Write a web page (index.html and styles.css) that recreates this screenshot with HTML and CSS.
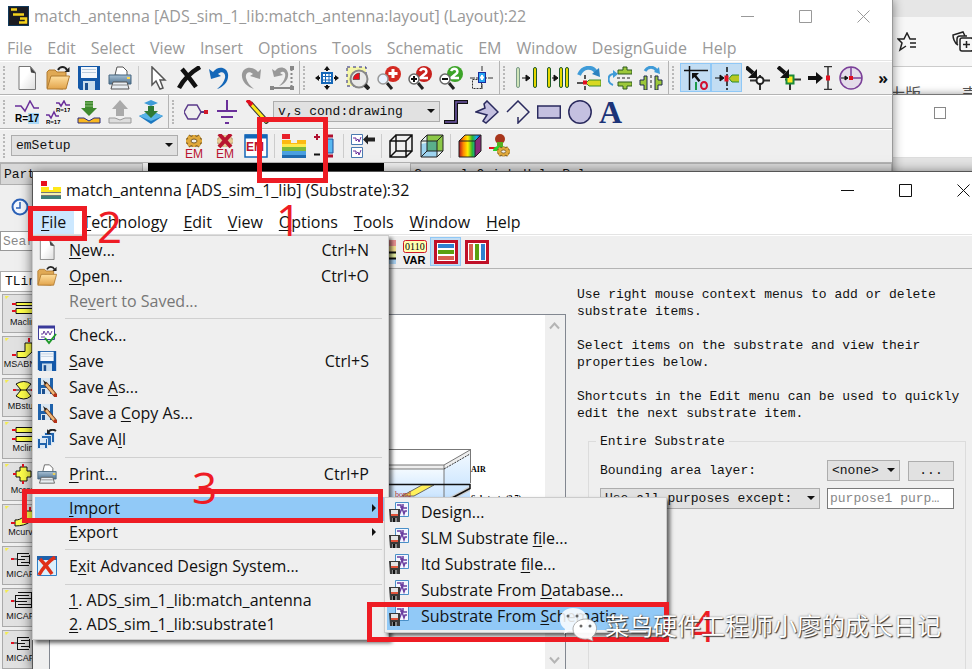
FILE: index.html
```
<!DOCTYPE html>
<html lang="en">
<head>
  <meta charset="UTF-8" />
  <meta name="viewport" content="width=device-width, initial-scale=1" />
  <title>match_antenna (Substrate)</title>
  <link rel="stylesheet" href="styles.css">
</head>
<body>

<!-- shared icons -->
<svg class="sprite" aria-hidden="true">
  <defs>
    <linearGradient id="gPage" x1="0" y1="0" x2="1" y2="1"><stop offset="0.4" stop-color="#fff"/><stop offset="1" stop-color="#ddd"/></linearGradient>
    <linearGradient id="gFolder" x1="0" y1="0" x2="0" y2="1"><stop offset="0" stop-color="#ffdf9e"/><stop offset="1" stop-color="#e2a44c"/></linearGradient>
    <linearGradient id="gSteel" x1="0" y1="0" x2="0" y2="1"><stop offset="0" stop-color="#a8c0d4"/><stop offset="1" stop-color="#4f7390"/></linearGradient>
    <linearGradient id="gRain" x1="0" y1="0" x2="1" y2="0"><stop offset="0" stop-color="#b01020"/><stop offset="0.2" stop-color="#ff8a00"/><stop offset="0.4" stop-color="#ffee00"/><stop offset="0.6" stop-color="#2db52d"/><stop offset="0.8" stop-color="#18a6f0"/><stop offset="1" stop-color="#2030c0"/></linearGradient>
    <linearGradient id="gSky" x1="0" y1="0" x2="0" y2="1"><stop offset="0" stop-color="#f4faff"/><stop offset="1" stop-color="#b9dcff"/></linearGradient>
  </defs>
  <symbol id="i-new" viewBox="0 0 24 24"><path d="M4 .5h11.500l5 6V23.500H4z" fill="url(#gPage)" stroke="#777"/><path d="M15 .5l6 7-5-1z" fill="#444"/></symbol>
  <symbol id="i-open" viewBox="0 0 24 24"><path d="M1 22V6l2-2h6l2 2h9v4l-3 13z" fill="#e0a955" stroke="#b07a30"/><path d="M1 23L5 10h18.500L20 23z" fill="url(#gFolder)" stroke="#b07a30"/><path d="M12 4c2-4 7-4 9 0" fill="none" stroke="#222" stroke-width="2"/><path d="M23.500 1v5h-5z" fill="#222"/></symbol>
  <symbol id="i-save" viewBox="0 0 24 24"><path d="M1 0h22v24H3l-2-2z" fill="#1358a8"/><path d="M4 1h16v11H4z" fill="#f4f8fc"/><path d="M5 3.500h14M5 6.500h14" stroke="#bcd"/><path d="M6 15h12v9H6z" fill="#c8dcec"/><path d="M8 17h3v7H8z" fill="#1b4f8f"/></symbol>
  <symbol id="i-print" viewBox="0 0 24 24"><path d="M7 9L9 1h6l4 4v5z" fill="#fff" stroke="#555"/><path d="M1 9h22v9H1z" fill="url(#gSteel)" stroke="#466680"/><path d="M5 16h14l2 7H3z" fill="#e8eef2" stroke="#555"/><path d="M5 19h14" stroke="#888"/><path d="M19 12h3" stroke="#ffd84a" stroke-width="2"/></symbol>
  <symbol id="i-strata" viewBox="0 0 24 24"><path d="M0 0h8v5H0z" fill="#e8202a"/><path d="M0 6h9v3h6V6h9v6H0z" fill="#fdb913"/><path d="M0 10h24v3H0z" fill="#ffe94a"/><path d="M0 13h24v4H0z" fill="#7fb83a"/><path d="M0 17h24v4H0z" fill="#4a9fe0"/><path d="M0 21h24v3H0z" fill="#1f6ab0"/></symbol>
  <symbol id="i-import" viewBox="0 0 20 20"><path d="M6.500.5h13v14h-13z" fill="#f4f6ff" stroke="#4a90c8"/><path d="M8 3h4v3M14 2v4h4M8 8h2l1 3 2-5 2 6 1-3h2" fill="none" stroke="#6a3fa0" stroke-width="1.500"/><path d="M0 7h11v13H1z" fill="#3a3a3a"/><path d="M2 8h7v6H2z" fill="#e4e4e4"/><path d="M2 13h7" stroke="#e0533a" stroke-width="2"/><path d="M3 16h5v4H3z" fill="#888"/><path d="M4 16h2v4H4z" fill="#111"/></symbol>
  <symbol id="i-saveas" viewBox="0 0 20 20"><path d="M1 1h15v16H1z" fill="#1f62ab"/><path d="M4 1h9v7H4zM4 11h9v6H4z" fill="#d8e6f2"/><path d="M5 12h3v5H5z" fill="#1b4f8f"/><path d="M8 6l11 13" stroke="#7a3d18" stroke-width="4"/><path d="M8 6l10 12" stroke="#f0b878" stroke-width="2.500"/><path d="M6 3l4 3-2 2z" fill="#222"/><path d="M17 17l3 3" stroke="#b83018" stroke-width="3"/></symbol>
  <symbol id="i-bend" viewBox="0 0 24 24"><path d="M2 9c4-9 13-9 17-3" fill="none" stroke="#3f9bd8" stroke-width="4"/><path d="M22 2l1 9-8-3z" fill="#2c82c0"/></symbol>
  <symbol id="i-gear" viewBox="0 0 24 14"><path d="M12 1v12M4 7h16M6 2.500l12 9M18 2.500l-12 9" stroke="#7a5a20" stroke-width="5"/><path d="M12 1v12M4 7h16M6 2.500l12 9M18 2.500l-12 9" stroke="#e0a93c" stroke-width="3"/><ellipse cx="12" cy="7" rx="7" ry="4.500" fill="#e0a93c"/><ellipse cx="12" cy="7" rx="3" ry="2" fill="#efefef" stroke="#7a5a20"/></symbol>
  <symbol id="i-new-part" viewBox="0 0 5 5"><path d="M0 0h5L1 4z" fill="#f4ec50"/></symbol>
</svg>

<!-- browser window behind everything -->
<div class="browser">
  <div class="browser-tabs"></div>
  <div class="browser-bar">
    <svg width="22" height="20" viewBox="0 0 22 20"><path d="M9 14l-6 4 2-7-4-4h6l3-6 3 6h6M13 11h6M13 15h6" fill="none" stroke="#222" stroke-width="1.500"/></svg>
    <svg width="22" height="22" viewBox="0 0 22 22"><path d="M6 14C2 12 1 6 1 4l10-3 2 4M5 14V8c0-2 1-3 3-3h7" fill="none" stroke="#222" stroke-width="1.500"/><rect x="8" y="7" width="13" height="13" rx="2" fill="#f7f7f7" stroke="#222" stroke-width="1.500"/><path d="M14.500 10v7M11 13.500h7" stroke="#222" stroke-width="1.500"/></svg>
  </div>
  <div class="browser-links"><span>士版</span><span>壳</span></div>
</div>
<div class="back-window">
  <div class="back-title"><i class="square"></i></div>
</div>

<!-- layout window -->
<div class="window layout-window">
  <header class="titlebar">
    <svg width="21" height="20" viewBox="0 0 21 20"><rect x="0.500" y="0.500" width="20" height="19" fill="#1c1c22" stroke="#123a5c"/><path d="M3 3.500h6M5 8.500h6M10 8.500h6M12 12.500h6v4H11" fill="none" stroke="#f5d21c" stroke-width="2.500"/></svg>
    <span class="title">match_antenna [ADS_sim_1_lib:match_antenna:layout] (Layout):22</span>
    <button class="win-btn" aria-label="Minimize"><svg width="13" height="13"><path d="M0 6.500h13" stroke="currentColor"/></svg></button>
    <button class="win-btn" aria-label="Maximize"><svg width="13" height="13"><path d="M.5.5h12v12H.5z" fill="none" stroke="currentColor"/></svg></button>
    <button class="win-btn" aria-label="Close"><svg width="13" height="13"><path d="M.5.5l12 12M12.500.5l-12 12" stroke="currentColor"/></svg></button>
  </header>
  <nav class="menubar">
    <button>File</button><button>Edit</button><button>Select</button><button>View</button><button>Insert</button><button>Options</button><button>Tools</button><button>Schematic</button><button>EM</button><button>Window</button><button>DesignGuide</button><button>Help</button>
  </nav>

  <div class="toolrow">
    <div class="toolbar">
      <button class="tool" aria-label="New"><svg><use href="#i-new"/></svg></button>
      <button class="tool" aria-label="Open"><svg><use href="#i-open"/></svg></button>
      <button class="tool" aria-label="Save"><svg><use href="#i-save"/></svg></button>
      <button class="tool" aria-label="Print"><svg><use href="#i-print"/></svg></button>
      <i class="sep"></i>
      <button class="tool" aria-label="Select"><svg viewBox="0 0 24 24"><path d="M6 1v18l4-4 4 8 3-1-3-8h5z" fill="#fff" stroke="#555" stroke-width="1.500"/></svg></button>
      <button class="tool" aria-label="Delete"><svg viewBox="0 0 24 24"><path d="M5 3q6 7 14 18M23 1Q9 9 2 22" fill="none" stroke="#111" stroke-width="4.500"/></svg></button>
      <button class="tool" aria-label="Undo"><svg viewBox="0 0 24 24"><path d="M1 3l2 10 10-3-3-2c4-4 8-1 7 4-1 4-4 8-8 11 7-2 12-8 11-15-1-7-10-9-15-2z" fill="#1467b8"/></svg></button>
      <button class="tool" aria-label="Redo"><svg viewBox="0 0 24 24"><path d="M22 3l-1 10-10-3 3-2c-4-4-8-1-7 4 1 4 4 8 8 11C8 21 2 15 3 8c1-7 10-9 16-2z" fill="#999"/></svg></button>
      <button class="tool" aria-label="End"><svg viewBox="0 0 24 24"><path d="M2 3l2 8 9-2-3-2c4-3 6 0 5 4-1 4-3 6-6 9 6-2 10-7 9-13-1-6-9-8-13-2z" fill="#999"/><path d="M2 22h18" stroke="#888" stroke-width="2"/><path d="M21.500 3v18" stroke="#888" stroke-width="2" stroke-dasharray="2 2"/><path d="M0 20h4v4H0zM20 20h4v4h-4zM20 0h4v4h-4z" fill="#888"/></svg></button>
    </div>
    <div class="toolbar">
      <button class="tool" aria-label="View all"><svg viewBox="0 0 24 24"><path d="M7 7h10v10H7z" fill="#fff" stroke="#1467b8" stroke-width="2"/><path d="M10.500 7v10M14 7v10M7 10.500h10M7 14h10" stroke="#1467b8"/><path d="M12 0l3 4H9zM12 24l3-4H9zM0 12l4-3v6zM24 12l-4-3v6z" fill="#111"/><path d="M12 2v3M12 19v3M2 12h3M19 12h3" stroke="#111" stroke-width="2"/></svg></button>
      <button class="tool" aria-label="Zoom area"><svg viewBox="0 0 24 24"><rect x="1" y="1" width="19" height="19" fill="#f4f6a8" stroke="#22227a" stroke-dasharray="3 3"/><circle cx="13" cy="13" r="8.500" fill="#e8e8e8" stroke="#888" stroke-width="2"/><path d="M13.500 13.500V7A6.500 6.500 0 0 0 7 13.500z" fill="#e8101c" stroke="#222" stroke-width="0.500"/><path d="M19 19l4 4" stroke="#222" stroke-width="4"/></svg></button>
      <button class="tool" aria-label="Zoom in"><svg viewBox="0 0 24 24"><path d="M10 17l5 6" stroke="#222" stroke-width="3"/><circle cx="16" cy="8" r="8" fill="#d42a22"/><path d="M16 3v9M11.500 7.500h9" stroke="#fff" stroke-width="3"/><circle cx="6" cy="13" r="5" fill="#eaf4ff" stroke="#999" stroke-width="1.500"/></svg></button>
      <button class="tool" aria-label="Zoom in by 2"><svg viewBox="0 0 24 24"><path d="M10 17l5 6" stroke="#222" stroke-width="3"/><circle cx="16" cy="8" r="8" fill="#c8201c"/><path d="M12 5c2-4 8-2 6 2l-6 5h8" fill="none" stroke="#fff" stroke-width="2.500"/><circle cx="6" cy="13" r="5" fill="#fff" stroke="#666" stroke-width="1.500"/><path d="M6 10v6M3 13h6" stroke="#111" stroke-width="2"/></svg></button>
      <button class="tool" aria-label="Zoom out by 2"><svg viewBox="0 0 24 24"><path d="M10 17l5 6" stroke="#222" stroke-width="3"/><circle cx="16" cy="8" r="8" fill="#3da428"/><path d="M12 5c2-4 8-2 6 2l-6 5h8" fill="none" stroke="#fff" stroke-width="2.500"/><circle cx="6" cy="13" r="5" fill="#fff" stroke="#666" stroke-width="1.500"/><path d="M3 13h6" stroke="#111" stroke-width="2"/></svg></button>
      <button class="tool" aria-label="Center"><svg viewBox="0 0 24 24"><path d="M12 0v24M0 12h24" stroke="#333" stroke-dasharray="5 1"/><path d="M2.500 13.500h9v9h-9z" fill="none" stroke="#333" stroke-dasharray="2 1"/><rect x="8.500" y="6.500" width="7" height="10" fill="#29a3f2" stroke="#1a2a9a"/><path d="M12 9v5M10 11.500h4" stroke="#fff" stroke-width="2"/></svg></button>
    </div>
    <div class="toolbar">
      <button class="tool" aria-label="Move"><svg viewBox="0 0 24 24"><rect x="1.500" y="1.500" width="3" height="20" rx="1.500" fill="#cfe4b8" stroke="#7a9a88"/><rect x="18.500" y="1.500" width="3" height="20" rx="1.500" fill="#e6d800" stroke="#1e5a2a"/><path d="M7 12h6M11 9v6l4-3z" fill="#111" stroke="#111"/></svg></button>
      <button class="tool" aria-label="Copy"><svg viewBox="0 0 24 24"><g fill="#e6d800" stroke="#1e5a2a"><rect x="1.500" y="1.500" width="3" height="20" rx="1.500"/><rect x="13.500" y="1.500" width="3" height="20" rx="1.500"/><rect x="19.500" y="1.500" width="3" height="20" rx="1.500"/></g><path d="M6 12h3M8 9v6l4-3z" fill="#111" stroke="#111"/></svg></button>
      <button class="tool" aria-label="Rotate"><svg viewBox="0 0 24 24"><use href="#i-bend"/><path d="M0 17h6M8 9v4M8 20v4" stroke="#222" stroke-width="1.500"/><path d="M12 14h12v6H12l-3-3z" fill="#d8d820" stroke="#3a8a2a"/><rect x="6" y="14.500" width="4" height="4" fill="#e01020"/></svg></button>
      <button class="tool" aria-label="Mirror X"><svg viewBox="0 0 24 24"><path d="M6 8C-1 8-1 17 5 19" fill="none" stroke="#3f9bd8" stroke-width="2"/><path d="M5 4l5 4-5 4z" fill="#3f9bd8"/><path d="M9 12h15" stroke="#222" stroke-dasharray="3 2"/><path d="M10 8V4h5V1h4v3h5v4zM10 16v4h5v3h4v-3h5v-4z" fill="#9cc83a" stroke="#2c5a1e"/></svg></button>
      <button class="tool" aria-label="Mirror Y"><svg viewBox="0 0 24 24"><path d="M6 5c3-5 9-5 12 0" fill="none" stroke="#3f9bd8" stroke-width="3"/><path d="M20 1l1 7-6-2z" fill="#3f9bd8"/><path d="M12 9v15" stroke="#222" stroke-dasharray="3 2"/><path d="M8 10H5v4H1v5h4v5h3zM16 10h3v4h4v5h-4v5h-3z" fill="#9cc83a" stroke="#1f2a4e"/></svg></button>
    </div>
    <div class="toolbar last">
      <button class="tool on" aria-label="Grid snap"><svg viewBox="0 0 24 24"><path d="M5.500 0v24M0 4.500h24" stroke="#111" stroke-width="1.500"/><path d="M8 7h7l-2.500 2.500 4 5-2 1.500-4-5L8 13z" fill="#111"/><path d="M12 16v8" stroke="#1a9a4a" stroke-width="2"/><ellipse cx="20" cy="19.500" rx="3" ry="3.500" fill="none" stroke="#d01030" stroke-width="2"/></svg></button>
      <button class="tool on" aria-label="Pin snap"><svg viewBox="0 0 24 24"><path d="M12 1v23" stroke="#111" stroke-width="1.500" stroke-dasharray="5 2"/><path d="M0 12h6M5 9l4 3-4 3z" fill="#111" stroke="#111"/><path d="M17 9h8v7h-8l-3-3.500z" fill="#b8c820" stroke="#2a8a2a"/><rect x="9.500" y="9.500" width="4" height="6" fill="#e01020"/></svg></button>
      <button class="tool" aria-label="Vertex snap"><svg viewBox="0 0 24 24"><path d="M14 9v15M4 14.500h20" stroke="#333" stroke-width="2"/><circle cx="14" cy="14.500" r="3.500" fill="#fff" stroke="#222" stroke-width="2"/><path d="M0 1l7 6" stroke="#111" stroke-width="4"/><path d="M11 3v9H2z" fill="#111"/></svg></button>
      <button class="tool" aria-label="Edge snap"><svg viewBox="0 0 24 24"><path d="M13 9v15M8 13.500h16" stroke="#333" stroke-width="2"/><rect x="9.500" y="9.500" width="7" height="8" fill="#ffe820" stroke="#1a8a3a" stroke-width="2"/><path d="M1 1l7 6" stroke="#111" stroke-width="4"/><path d="M12 3v9H3z" fill="#111"/></svg></button>
      <button class="tool" aria-label="Midpoint snap"><svg viewBox="0 0 24 24"><path d="M20 1v22M16 .5h8M16 23.500h8" stroke="#333" stroke-width="1.500"/><path d="M0 12h9" stroke="#111" stroke-width="4"/><path d="M8 6l7 6-7 6z" fill="#111"/><rect x="18" y="9.500" width="4" height="5" fill="#e01020"/></svg></button>
      <button class="tool" aria-label="Center snap"><svg viewBox="0 0 24 24"><circle cx="12" cy="12" r="11" fill="#e4dcea" stroke="#7a3f98" stroke-width="1.500"/><path d="M12 1v11h11" fill="none" stroke="#7a3f98" stroke-width="1.500"/><path d="M2 12h5M6 10l3 2-3 2z" fill="#111" stroke="#111"/><rect x="10" y="10" width="4" height="4" fill="#e01020"/></svg></button>
      <button class="more" aria-label="More">»</button>
    </div>
  </div>

  <div class="toolrow">
    <div class="toolbar">
      <button class="tool" aria-label="Tune"><svg viewBox="0 0 24 24"><path d="M0 6h6l4 5 5-10 4 7h5" fill="none" stroke="#6a2f9a" stroke-width="1.500"/><rect x="13" y="13" width="11" height="11" fill="#a8d8f8"/><text x="0" y="22" class="t-icon">R=</text><text x="13" y="22" class="t-icon">17</text></svg></button>
      <button class="tool" aria-label="Tune all"><svg viewBox="0 0 24 24"><path d="M10 3h3l2 3 3-5 2 4h4M0 15h3l2 3 3-6 2 4h3" fill="none" stroke="#6a2f9a" stroke-width="1.500"/><text x="10" y="12" class="t-tiny">R=17</text><text x="0" y="24" class="t-tiny">R=17</text></svg></button>
      <button class="tool" aria-label="Push down"><svg viewBox="0 0 24 24"><path d="M1 18h6l5 3 5-3h6v5H1z" fill="#f8b820" stroke="#2a2a7a"/><path d="M8 1h8v7h4l-8 8-8-8h4z" fill="#3f8a2e"/><path d="M8 3h8M8 6h8" stroke="#8cc078"/></svg></button>
      <button class="tool" aria-label="Pop up"><svg viewBox="0 0 24 24"><path d="M1 18h6l5 2 5-2h6v5H1z" fill="#ddd" stroke="#999"/><path d="M8 16h8V9h4l-8-9-8 9h4z" fill="#aaa"/></svg></button>
      <button class="tool" aria-label="Layers"><svg viewBox="0 0 24 24"><path d="M0 16l12-5 12 5-12 8z" fill="#1c78c0"/><path d="M0 16l12-5 12 5-12 5z" fill="#58b4e8"/><path d="M5 3l7-3 7 3-7 3z" fill="#3f9bd8"/><path d="M9 6h6v5h4l-7 7-7-7h4z" fill="#2f7a34"/></svg></button>
    </div>
    <div class="toolbar last">
      <button class="tool" aria-label="Pin"><svg viewBox="0 0 24 24"><path d="M4 5h9l4 7-4 7H4l-4-7z" fill="none" stroke="#5a3a8a" stroke-width="1.500"/><path d="M17 12h4" stroke="#5a3a8a" stroke-width="2"/><rect x="20" y="10" width="4" height="4" fill="#d01828"/></svg></button>
      <button class="tool" aria-label="Ground"><svg viewBox="0 0 24 24"><path d="M12 0v11M2 11h20M6 17h12M10 23h4" stroke="#6a2f9a" stroke-width="2"/></svg></button>
      <button class="tool" aria-label="Wire"><svg viewBox="0 0 24 24"><path d="M4 3l18 20" stroke="#333" stroke-width="5"/><path d="M4 3l17 19" stroke="#ffe81a" stroke-width="3"/><path d="M1 0l5 5" stroke="#e01020" stroke-width="4"/></svg></button>
      <label class="combo combo-layer"><select aria-label="Layer"><option>v,s cond:drawing</option></select></label>
      <button class="tool" aria-label="Trace"><svg viewBox="0 0 24 24"><path d="M0 22h12V2h12" fill="none" stroke="#111" stroke-width="4"/><path d="M1 22h11V2h11" fill="none" stroke="#6f58a8" stroke-width="1.500"/></svg></button>
      <button class="tool" aria-label="Polygon"><svg viewBox="0 0 24 24"><path d="M12 1l11 11-12 11-3-2 4-6-11-3 9-4-1-4z" fill="#c4c0e0" stroke="#2a2a5e" stroke-width="1.500"/></svg></button>
      <button class="tool" aria-label="Polyline"><svg viewBox="0 0 24 24"><path d="M1 12L12 1l11 11-11 11V17" fill="none" stroke="#2a2a5e" stroke-width="1.500"/></svg></button>
      <button class="tool" aria-label="Rectangle"><svg viewBox="0 0 24 24"><path d="M.7 6h22.600v12H.7z" fill="#c4c0e0" stroke="#2a2a5e" stroke-width="1.500"/></svg></button>
      <button class="tool" aria-label="Circle"><svg viewBox="0 0 24 24"><circle cx="12" cy="12" r="11.200" fill="#c4c0e0" stroke="#2a2a5e" stroke-width="1.500"/></svg></button>
      <button class="tool" aria-label="Text"><span class="big-a">A</span></button>
    </div>
  </div>

  <div class="toolrow">
    <div class="toolbar last">
      <label class="combo combo-setup"><select aria-label="EM setup"><option>emSetup</option></select></label>
      <button class="tool" aria-label="EM settings"><svg viewBox="0 0 24 24"><use href="#i-gear" width="24" height="14"/><text x="3" y="24" class="t-em">EM</text></svg></button>
      <button class="tool" aria-label="EM stop"><svg viewBox="0 0 24 24"><use href="#i-gear" width="24" height="14" opacity="0.5"/><path d="M6 0l12 13M18 0L6 13" stroke="#b81430" stroke-width="4"/><text x="3" y="24" class="t-em">EM</text></svg></button>
      <button class="tool" aria-label="EM window"><svg viewBox="0 0 24 24"><path d="M1 1h22v22H1z" fill="#fff" stroke="#1467b8" stroke-width="1.500"/><path d="M1 2.500h22" stroke="#1467b8" stroke-width="4"/><text x="2" y="17" class="t-em t-bold">EM</text></svg></button>
      <i class="sep"></i>
      <button class="tool" aria-label="Substrate"><svg><use href="#i-strata"/></svg></button>
      <button class="tool" aria-label="Ports"><svg viewBox="0 0 24 24"><path d="M4 0v6M1 3h6" stroke="#b01030" stroke-width="2"/><path d="M1 20.500h6" stroke="#111" stroke-width="2"/><path d="M12 5h8v14h-8z" fill="#58b8f0" stroke="#1c4f9a"/><path d="M12 2h8M12 22h8" stroke="#b01030" stroke-width="3"/></svg></button>
      <i class="sep"></i>
      <button class="tool" aria-label="Generate"><svg viewBox="0 0 24 24"><path d="M.5.5h11v10H.5zM.5 13.500h11v10H.5z" fill="#fff" stroke="#4a7ab0"/><path d="M2 4h3v3l2-2 1 3 2-5M2 17h3v3l2-2 1 3 2-5" fill="none" stroke="#6a2f9a"/><path d="M12 5.500l5-5v3h7v4h-7v3z" fill="#222"/></svg></button>
      <i class="sep"></i>
      <button class="tool" aria-label="Wireframe"><svg viewBox="0 0 24 24"><path d="M1 7h16v16H1zM7 1h16v16H7zM1 7l6-6M17 7l6-6M1 23l6-6M17 23l6-6" fill="none" stroke="#111" stroke-width="1.500"/></svg></button>
      <button class="tool" aria-label="Solid"><svg viewBox="0 0 24 24"><path d="M1 7l6-6h16v16l-6 6H1z" fill="#e8f4f0"/><path d="M1 10l16-3v16H1z" fill="#9ed4f0"/><path d="M7 1h16v16H7z" fill="#8cc848"/><path d="M7 7h10v10H7z" fill="#5aaf8a"/><path d="M1 7h16v16H1zM7 1h16v16H7zM1 7l6-6M17 7l6-6M1 23l6-6M17 23l6-6" fill="none" stroke="#222"/></svg></button>
      <i class="sep"></i>
      <button class="tool" aria-label="Results"><svg viewBox="0 0 24 24"><path d="M1 7l6-6h16l-6 6v16H1z" fill="url(#gRain)"/><path d="M17 7l6-6v16l-6 6z" fill="#8a2a7a"/><path d="M1 7h16v16H1zM1 7l6-6h16v16l-6 6M17 7l6-6" fill="none" stroke="#222"/></svg></button>
      <button class="tool" aria-label="Far field"><svg viewBox="0 0 24 24"><path d="M0 14h8" stroke="#e01020" stroke-width="2"/><path d="M4 17c0-7 14-7 14 0z" fill="#2ad02a"/><circle cx="11" cy="5" r="5" fill="#a8361c"/><path d="M8 8h6v4H8z" fill="#58b020"/><use href="#i-gear" x="5" y="11" width="19" height="13"/></svg></button>
    </div>
  </div>

  <div class="layout-body">
    <aside class="palette">
      <div class="palette-title">Parts</div>
      <div class="palette-history"><svg width="18" height="18" viewBox="0 0 18 18"><circle cx="9" cy="9" r="7.500" fill="#f4f8ff" stroke="#2c62b8" stroke-width="2"/><path d="M9 4v6H5" fill="none" stroke="#2c62b8" stroke-width="1.500"/></svg></div>
      <input class="palette-search" type="text" placeholder="Search" aria-label="Search">
      <label class="combo palette-lib"><select aria-label="Library"><option>TLines-Microstrip</option></select></label>
      <div class="parts">
        <button><svg viewBox="0 0 38 22"><use href="#i-new-part" x="2" y="1" width="4" height="4"/><path d="M13 7.500h20v3H13zM13 13.500h20v5H13z" class="part"/><path d="M9 9h4M9 16h4" class="pin"/></svg>Maclin</button>
        <button><svg viewBox="0 0 38 22"><use href="#i-new-part" x="2" y="1" width="4" height="4"/><path d="M14 20.500v-6h8V6h7v9l-6 5.500z" class="part"/><path d="M9 18h4M26 1v4" class="pin"/></svg>MSABND</button>
        <button><svg viewBox="0 0 38 22"><use href="#i-new-part" x="2" y="1" width="4" height="4"/><path d="M13 5q8-5 15 0l-5 6 5 6q-7 6-15 0l5-6z" class="part"/><path d="M12 11h17" stroke="#111"/><path d="M10 11h3M28 11h3" class="pin"/></svg>MBstub</button>
        <button><svg viewBox="0 0 38 22"><use href="#i-new-part" x="2" y="1" width="4" height="4"/><path d="M13 6.500h18v5H13zM13 15.500h18v5H13z" class="part"/><path d="M9 9h4M9 18h4" class="pin"/></svg>Mclin</button>
        <button><svg viewBox="0 0 38 22"><use href="#i-new-part" x="2" y="1" width="4" height="4"/><path d="M17 4h7v4h4v6h-4v4h-7v-4h-4V8h4z" class="part"/><path d="M10 11h3M20 1v3M20 18v3" class="pin"/></svg>Mcros</button>
        <button><svg viewBox="0 0 38 22"><use href="#i-new-part" x="2" y="1" width="4" height="4"/><path d="M12 21v-6c7 0 10-4 10-9h10c0 9-7 15-20 15z" class="part"/><path d="M8 18h4M27 2v4" class="pin"/></svg>Mcurve</button>
        <button><svg viewBox="0 0 38 22"><use href="#i-new-part" x="2" y="1" width="4" height="4"/><path d="M10 12h4M14.500 6v13M14 6.500h12M14 12.500h8M14 18.500h12M26.500 8v9M18 9.500h9M18 15.500h9" class="cap"/><path d="M8 12h3" class="pin"/></svg>MICAP1</button>
        <button><svg viewBox="0 0 38 22"><use href="#i-new-part" x="2" y="1" width="4" height="4"/><path d="M10 12h2M12.500 6v13M12 6.500h14M12 12.500h12M12 18.500h16M28.500 3v16M15 3.500h13M15 9.500h13M15 15.500h13" class="cap"/><path d="M8 12h3" class="pin"/></svg>MICAP2</button>
        <button><svg viewBox="0 0 38 22"><use href="#i-new-part" x="2" y="1" width="4" height="4"/><path d="M10 12h4M14.500 6v13M14 6.500h12M14 12.500h8M14 18.500h12M26.500 8v9M18 9.500h9M18 15.500h9" class="cap"/><path d="M8 12h3" class="pin"/></svg>MICAP3</button>
      </div>
    </aside>
    <div class="drawing"></div>
    <aside class="help-dock"><div class="palette-title">General Quick Help Rules</div></aside>
  </div>
</div>

<!-- substrate window -->
<div class="window substrate-window">
  <header class="titlebar">
    <svg width="20" height="18" viewBox="0 0 20 18"><path d="M0 0h6v5H0z" fill="#e8101c"/><path d="M0 6h8v3h4V6h8v5H0z" fill="#ffe81a"/><path d="M0 11h20v3H0z" fill="#f4f0b0"/><path d="M0 11.500h20M0 14.500h20" stroke="#777"/><path d="M0 15h20v3H0z" fill="#3f7f78"/></svg>
    <span class="title">match_antenna [ADS_sim_1_lib] (Substrate):32</span>
    <button class="win-btn" aria-label="Minimize"><svg width="13" height="13"><path d="M0 6.500h13" stroke="currentColor"/></svg></button>
    <button class="win-btn" aria-label="Maximize"><svg width="13" height="13"><path d="M.5.5h12v12H.5z" fill="none" stroke="currentColor"/></svg></button>
    <button class="win-btn" aria-label="Close"><svg width="13" height="13"><path d="M.5.5l12 12M12.500.5l-12 12" stroke="currentColor"/></svg></button>
  </header>
  <nav class="menubar">
    <button class="open"><u>F</u>ile</button><button><u>T</u>echnology</button><button><u>E</u>dit</button><button><u>V</u>iew</button><button><u>O</u>ptions</button><button><u>T</u>ools</button><button><u>W</u>indow</button><button><u>H</u>elp</button>
  </nav>
  <div class="toolrow sub-tools">
    <button class="tool" aria-label="Materials"><svg viewBox="0 0 24 24"><path d="M0 0h24v6H0z" fill="#e89090"/><path d="M0 6h24v6H0z" fill="#f4e090"/><path d="M0 13h24v5H0z" fill="#e8f0a0"/><path d="M0 19h24v5H0z" fill="#a8d0f0"/><path d="M0 12.500h24M0 18.500h24" stroke="#111" stroke-width="2"/></svg></button>
    <button class="tool" aria-label="Variables"><svg viewBox="0 0 24 24"><rect x="0.500" y="0.500" width="23" height="12" rx="2" fill="#ffffb0" stroke="#d01828"/><text x="2" y="10" class="t-bits">0110</text><text x="0" y="24" class="t-var">VAR</text></svg></button>
    <button class="tool on" aria-label="Layers"><svg viewBox="0 0 24 24"><path d="M1.500 1.500h21v21h-21z" fill="#fff" stroke="#c01028" stroke-width="3"/><path d="M4 6h16" stroke="#2f80d0" stroke-width="4"/><path d="M4 12h16" stroke="#5aa010" stroke-width="4"/><path d="M4 18h16" stroke="#d86050" stroke-width="4"/></svg></button>
    <button class="tool" aria-label="Vias"><svg viewBox="0 0 24 24"><path d="M1.500 1.500h21v21h-21z" fill="#fff" stroke="#c01028" stroke-width="3"/><path d="M6 4v16" stroke="#d86050" stroke-width="4"/><path d="M12 4v16" stroke="#5aa010" stroke-width="4"/><path d="M18 4v16" stroke="#2f80d0" stroke-width="4"/></svg></button>
  </div>

  <main class="substrate-body">
    <div class="canvas">
      <div class="sheet">
        <svg class="stack" width="200" height="60" viewBox="0 0 200 60">
          <path d="M0 20h114v40H0z" fill="url(#gSky)"/>
          <path d="M114 18l26-17v59h-26z" fill="url(#gSky)"/>
          <path d="M0 1.500h140l-26 14.500H0z" fill="#fff"/>
          <path d="M0 16h114v4H0z" fill="#eee"/><path d="M114 16l26-15v4l-26 15z" fill="#eee"/>
          <path d="M0 .5h140.500M0 16h114l26-15M0 20h114M140.500 0v34M114 16v33" fill="none" stroke="#777"/>
          <path d="M114 20l26-15" fill="none" stroke="#333" stroke-dasharray="2 1"/>
          <path d="M92 36h12L84 47H72z" fill="#fff05a" stroke="#666"/>
          <path d="M118 49l22-12v5l-14 7z" fill="#ccc"/>
          <path d="M0 35.500h140v4L122 49" fill="none" stroke="#111" stroke-width="1.500"/>
          <text x="65" y="48" class="t-bond">bond</text>
          <text x="141" y="23" class="t-mat">AIR</text>
          <text x="141" y="52" class="t-mat">Substrate (3.7)</text>
        </svg>
      </div>
      <div class="scrollbar">
        <svg width="11" height="8" viewBox="0 0 11 8"><path d="M1 6.500l4.500-5 4.500 5" fill="none" stroke="#b4b4b4" stroke-width="2"/></svg>
        <svg width="11" height="8" viewBox="0 0 11 8"><path d="M1 1.500l4.500 5 4.500-5" fill="none" stroke="#b4b4b4" stroke-width="2"/></svg>
      </div>
    </div>
    <section class="properties">
      <p>Use right mouse context menus to add or delete<br>substrate items.</p>
      <p>Select items on the substrate and view their<br>properties below.</p>
      <p>Shortcuts in the Edit menu can be used to quickly<br>edit the next substrate item.</p>
      <fieldset>
        <legend>Entire Substrate</legend>
        <div class="field">
          <label for="bounding">Bounding area layer:</label>
          <span class="combo combo-none"><select id="bounding"><option>&lt;none&gt;</option></select></span>
          <button class="dots">...</button>
        </div>
        <div class="field">
          <span class="combo combo-purpose"><select aria-label="Purposes"><option>Use all purposes except:</option></select></span>
          <input type="text" class="purpose" placeholder="purpose1 purp…" aria-label="Purpose list">
        </div>
      </fieldset>
    </section>
  </main>
</div>

<!-- File menu -->
<div class="menu file-menu">
  <button class="item has-icon"><svg><use href="#i-new"/></svg><span><u>N</u>ew...</span><kbd>Ctrl+N</kbd></button>
  <button class="item has-icon"><svg><use href="#i-open"/></svg><span><u>O</u>pen...</span><kbd>Ctrl+O</kbd></button>
  <button class="item" disabled><span>Re<u>v</u>ert to Saved...</span></button>
  <hr>
  <button class="item has-icon"><svg viewBox="0 0 20 20"><path d="M1.500 1.500h16v13h-16z" fill="#fff" stroke="#3a3a9a"/><path d="M1 2h17" stroke="#3a3a9a" stroke-width="3"/><path d="M4 9h2l1-3 2 4 2-4 2 4 2-4M4 12h4" fill="none" stroke="#6a3fa0"/><path d="M8 13l4 5 7-9" fill="none" stroke="#1f9a2a" stroke-width="2"/></svg><span>Check...</span></button>
  <button class="item has-icon"><svg><use href="#i-save"/></svg><span><u>S</u>ave</span><kbd>Ctrl+S</kbd></button>
  <button class="item has-icon"><svg><use href="#i-saveas"/></svg><span>Save <u>A</u>s...</span></button>
  <button class="item has-icon"><svg><use href="#i-saveas"/></svg><span>Save a <u>C</u>opy As...</span></button>
  <button class="item has-icon"><svg viewBox="0 0 20 20"><g stroke="#dce8f4"><path d="M7.500 3.500h10v10h-10z" fill="#1f62ab"/><path d="M4.500 6.500h10v10h-10z" fill="#2a6cb4"/><path d="M.5 9.500h10v10H.5z" fill="#1f62ab"/></g><path d="M3 10h6v4H3zM3 16h5v3H3z" fill="#dce8f4"/><path d="M11 3q4-4 8-1" fill="none" stroke="#222" stroke-width="2"/><path d="M10 0v5h4z" fill="#222"/></svg><span>Save A<u>l</u>l</span></button>
  <hr>
  <button class="item has-icon"><svg><use href="#i-print"/></svg><span><u>P</u>rint...</span><kbd>Ctrl+P</kbd></button>
  <hr>
  <button class="item selected more-items"><span><u>I</u>mport</span></button>
  <button class="item more-items"><span><u>E</u>xport</span></button>
  <hr>
  <button class="item has-icon"><svg viewBox="0 0 20 20"><path d="M.5.5h19v19H.5z" fill="#dcf0fc" stroke="#2f80c8"/><path d="M0 2h20" stroke="#1f62ab" stroke-width="4"/><path d="M3 3q6 6 12 15M18 1Q8 8 2 19" fill="none" stroke="#e03018" stroke-width="3.500"/></svg><span>E<u>x</u>it Advanced Design System...</span></button>
  <hr>
  <button class="item"><span><u>1</u>. ADS_sim_1_lib:match_antenna</span></button>
  <button class="item"><span><u>2</u>. ADS_sim_1_lib:substrate1</span></button>
</div>

<!-- Import submenu -->
<div class="menu import-menu">
  <button class="item has-icon"><svg><use href="#i-import"/></svg><span>Design...</span></button>
  <button class="item has-icon"><svg><use href="#i-import"/></svg><span>SLM Substrate <u>f</u>ile...</span></button>
  <button class="item has-icon"><svg><use href="#i-import"/></svg><span>ltd Substrate <u>f</u>ile...</span></button>
  <button class="item has-icon"><svg><use href="#i-import"/></svg><span>Substrate From <u>D</u>atabase...</span></button>
  <button class="item has-icon selected"><svg><use href="#i-import"/></svg><span>Substrate From <u>S</u>chematic</span></button>
</div>

<!-- step markers -->
<div class="mark mark-1"></div><span class="num num-1">1</span>
<div class="mark mark-2"></div><span class="num num-2">2</span>
<div class="mark mark-3"></div><span class="num num-3">3</span>
<div class="mark mark-4"></div><span class="num num-4">4</span>

<div class="watermark">
  <svg width="40" height="36" viewBox="0 0 40 36"><path d="M14 1C6 1 1 6 1 13c0 4 2 7 5 9l-1 5 5-3c9 2 18-3 18-11S22 1 14 1z" fill="#fff" fill-opacity="0.850"/><path d="M27 12c-8 0-13 5-13 10 0 7 7 11 15 10l5 2-1-4c8-6 5-18-6-18z" fill="#fff" fill-opacity="0.950" stroke="#999" stroke-width="0.800"/><g fill="#666"><circle cx="9" cy="9" r="1.500"/><circle cx="18" cy="9" r="1.500"/><circle cx="22" cy="19" r="1.500"/><circle cx="31" cy="19" r="1.500"/></g></svg>
  <span lang="zh-CN">菜鸟硬件工程师小廖的成长日记</span>
</div>

</body>
</html>
```
FILE: styles.css
```
* {
  box-sizing: border-box;
}
body {
  margin: 0;
  position: relative;
  height: 100vh;
  overflow: hidden;
  background: #efefef;
  font-family: "Open Sans", "Noto Sans CJK SC", sans-serif;
  font-size: 16px;
  color: #111;
}
button, input, select {
  font: inherit;
  color: inherit;
  margin: 0;
}
button {
  padding: 0;
  border: none;
  background: none;
  white-space: nowrap;
}
svg {
  display: block;
  flex: none;
}
.sprite {
  position: absolute;
  width: 0;
  height: 0;
}

/* windows at the back */
.browser {
  position: absolute;
  inset: 0 0 0 auto;
  width: 120px;
  background: #fff;
}
.browser-tabs {
  height: 17px;
  background: #e6e6e6;
}
.browser-bar {
  height: 50px;
  padding-left: 45px;
  display: flex;
  align-items: center;
  gap: 33px;
  background: #f7f7f7;
  border-bottom: 1px solid #ccc;
}
.browser-links {
  display: flex;
  justify-content: space-between;
  padding: 14px 0 0 37px;
  margin-right: -6px;
  color: #555;
}
.back-window {
  position: absolute;
  inset: 94px 0 0 auto;
  width: 120px;
  background: #e4e4e4;
  border-top: 1px solid #777;
  box-shadow: 0 0 8px #0006;
}
.back-title {
  height: 63px;
  padding: 12px 26px;
  display: flex;
  justify-content: flex-end;
  background: #fff;
  border-bottom: 1px solid #ddd;
}
.square {
  width: 12px;
  height: 12px;
  border: 1px solid #888;
}

/* window frame */
.window {
  position: absolute;
  display: flex;
  flex-direction: column;
  background: #efefef;
}
.layout-window {
  inset: 0 79px 0 0;
  border-right: 1px solid #999;
  box-shadow: 0 0 10px #0007;
}
.substrate-window {
  inset: 171px -21px 0 32px;
  border: 1px solid #555;
  border-bottom: none;
  box-shadow: 0 2px 12px #0009;
}
.titlebar {
  display: flex;
  align-items: center;
  height: 32px;
  padding-left: 8px;
  background: #fff;
}
.title {
  flex: 1;
  padding-left: 5px;
  white-space: nowrap;
}
.win-btn {
  width: 58px;
  height: 32px;
  display: flex;
  align-items: center;
  justify-content: center;
}
.menubar {
  display: flex;
  align-items: flex-end;
  height: 29px;
  background: #fff;
  border-bottom: 1px solid #e4e4e4;
}
.menubar button {
  height: 25px;
  padding: 0 8px 0 7px;
}
.layout-window .titlebar,
.layout-window .menubar {
  color: #999;
}
.substrate-window .titlebar {
  height: 36px;
}
.substrate-window .menubar {
  height: 27px;
}
.substrate-window .menubar button {
  padding: 0 8px;
}
.menubar .open {
  background: #cce8ff;
}
u {
  text-underline-offset: 2px;
  text-decoration-thickness: 1px;
}

/* toolbars */
.toolrow {
  display: flex;
  height: 34px;
  border-bottom: 1px solid #b4b4b4;
  box-shadow: inset 0 1px #fff;
}
.toolbar {
  display: flex;
  align-items: center;
  padding: 0 2px 0 11px;
  border-right: 1px solid #b4b4b4;
  position: relative;
}
.toolbar::before {
  content: "";
  position: absolute;
  left: 3px;
  top: 5px;
  bottom: 4px;
  border-left: 2px dotted #b8b8b8;
}
.toolbar.last {
  flex: 1;
  border-right: none;
}
.tool {
  width: 31px;
  height: 29px;
  display: flex;
  align-items: center;
  justify-content: center;
}
.tool svg {
  width: 24px;
  height: 24px;
}
.tool.on {
  background: #c2ddf3;
  border: 1px solid #90c8f6;
}
.sep {
  width: 1px;
  height: 24px;
  margin: 0 3px;
  background: #ccc;
}
.more {
  margin-left: auto;
  padding-right: 2px;
  font-weight: bold;
}
.big-a {
  font: bold 32px/24px "Liberation Serif", serif;
  color: #1c3478;
}
.t-icon {
  font: bold 10px "Liberation Sans", sans-serif;
}
.t-tiny {
  font: bold 6px "Liberation Sans", sans-serif;
}
.t-em {
  font: 12px "Liberation Sans", sans-serif;
  fill: #b81430;
}
.t-bold {
  font-weight: bold;
}
.t-bits {
  font: 10px "Liberation Serif", serif;
}
.t-var {
  font: bold 11px "Liberation Sans", sans-serif;
}

/* drop-downs */
.combo {
  position: relative;
  display: block;
  height: 21px;
  font-family: "Liberation Mono", monospace;
  font-size: 13px;
}
.combo select {
  appearance: none;
  width: 100%;
  height: 100%;
  padding: 0 4px;
  border: 1px solid #adadad;
  border-radius: 0;
  background: #e1e1e1;
}
.combo::after {
  content: "";
  position: absolute;
  right: 5px;
  top: 8px;
  border: 4px solid transparent;
  border-top-color: #111;
  border-bottom: none;
}
.combo-layer,
.combo-setup {
  width: 167px;
}

/* layout window body */
.layout-body {
  flex: 1;
  display: flex;
  min-height: 0;
  overflow: hidden;
  font-family: "Liberation Mono", monospace;
  font-size: 13px;
}
.palette {
  width: 143px;
}
.palette-title {
  height: 22px;
  padding-left: 3px;
  line-height: 22px;
  background: #d8d8d8;
  border: 1px solid #b0b0b0;
}
.palette-history {
  height: 46px;
  padding: 13px 11px;
}
.palette-search {
  display: block;
  width: 100%;
  height: 20px;
  border: 1px solid #999;
}
.palette-search::placeholder,
.purpose::placeholder {
  color: #888;
}
.palette-lib {
  margin: 20px 0 2px;
}
.palette-lib select {
  background: #fff;
}
.parts {
  display: grid;
  grid-template-columns: 42px;
  gap: 3px;
  padding-left: 2px;
}
.parts button {
  height: 39px;
  padding-bottom: 4px;
  border: 1px solid #aaa;
  background: #e1e1e1;
  font: 9px/11px "Liberation Sans", sans-serif;
}
.parts svg {
  width: 38px;
  height: 22px;
}
.part {
  fill: #ffff4a;
  stroke: #111;
}
.cap {
  fill: none;
  stroke: #111;
}
.pin {
  stroke: #e01020;
  stroke-width: 2;
}
.drawing {
  width: 236px;
  margin-left: 5px;
  background: #000;
}
.help-dock {
  flex: 1;
  padding-left: 26px;
}

/* substrate window body */
.sub-tools {
  height: 34px;
  padding-left: 335px;
  align-items: center;
}
.substrate-body {
  flex: 1;
  display: flex;
  min-height: 0;
  font-family: "Liberation Mono", monospace;
  font-size: 13px;
  line-height: 17px;
}
.canvas {
  width: 517px;
  margin: 45px 0 0 16px;
  display: flex;
  border: 1px solid #828790;
  border-bottom: none;
}
.sheet {
  flex: 1;
  position: relative;
  background: #fff;
}
.stack {
  position: absolute;
  left: 280px;
  top: 134px;
}
.t-mat {
  font: bold 8px "Liberation Serif", serif;
}
.t-bond {
  font: 8px "Liberation Serif", serif;
  fill: #b03030;
}
.scrollbar {
  width: 20px;
  padding: 7px 4px 5px;
  display: flex;
  flex-direction: column;
  justify-content: space-between;
}
.properties {
  flex: 1;
  padding: 17px 26px 0 11px;
  display: flex;
  flex-direction: column;
}
.properties p {
  margin: 0 0 17px;
  white-space: nowrap;
}
fieldset {
  flex: 1;
  margin: -6px 0 0 11px;
  padding: 10px 11px;
  border: 1px solid #dcdcdc;
  border-bottom: none;
}
legend {
  margin-left: -4px;
  padding: 0 4px;
}
.field {
  display: flex;
  align-items: center;
  justify-content: space-between;
  height: 21px;
  margin-bottom: 7px;
}
.field label {
  flex: 1;
}
.combo-none {
  width: 73px;
  margin-right: 8px;
}
.dots {
  width: 46px;
  height: 20px;
  border: 1px solid #adadad;
  background: #e1e1e1;
}
.combo-purpose {
  width: 220px;
}
.purpose {
  width: 127px;
  height: 21px;
  padding: 0 2px;
  border: 1px solid #7a7a7a;
  background: #fff;
}

/* menus */
.menu {
  position: absolute;
  padding: 2px;
  background: #efefef;
  border: 1px solid #ccc;
  box-shadow: 3px 3px 4px #0009;
}
.file-menu {
  left: 32px;
  top: 235px;
  width: 357px;
}
.import-menu {
  left: 384px;
  top: 497px;
  width: 283px;
}
.item {
  position: relative;
  display: flex;
  align-items: center;
  width: 100%;
  height: 24px;
  padding: 0 17px 2px 34px;
}
.has-icon {
  height: 26px;
  padding-left: 2px;
}
.item svg {
  width: 20px;
  height: 20px;
  margin-right: 12px;
}
.item span {
  flex: 1;
  text-align: left;
}
.item kbd {
  font: inherit;
}
.item:disabled {
  color: #777;
}
.selected {
  background: #91c9f7;
}
.more-items::after {
  content: "";
  margin-right: -7px;
  border: 4px solid transparent;
  border-left-color: #111;
  border-right: none;
}
.menu hr {
  height: 1px;
  margin: 4px 4px 4px 30px;
  border: none;
  background: #d0d0d0;
}

/* step markers */
.mark {
  position: absolute;
  border: 5px solid #ee1c24;
}
.mark-1 {
  left: 257px;
  top: 117px;
  width: 71px;
  height: 66px;
}
.mark-2 {
  left: 28px;
  top: 206px;
  width: 59px;
  height: 35px;
}
.mark-3 {
  left: 22px;
  top: 489px;
  width: 361px;
  height: 34px;
}
.mark-4 {
  left: 367px;
  top: 602px;
  width: 302px;
  height: 40px;
}
.num {
  position: absolute;
  font-size: 44px;
  line-height: 44px;
  color: #ee1c24;
}
.num-1 {
  left: 276px;
  top: 197px;
}
.num-2 {
  left: 97px;
  top: 204px;
}
.num-3 {
  left: 192px;
  top: 465px;
}
.num-4 {
  left: 690px;
  top: 603px;
}
.watermark {
  position: absolute;
  left: 559px;
  top: 606px;
  display: flex;
  align-items: center;
  gap: 6px;
  font: 24px/38px "Noto Sans CJK SC", sans-serif;
  color: #fff;
  text-shadow: 1px 1px 1px #333, 0 0 2px #777;
  white-space: nowrap;
}
```
